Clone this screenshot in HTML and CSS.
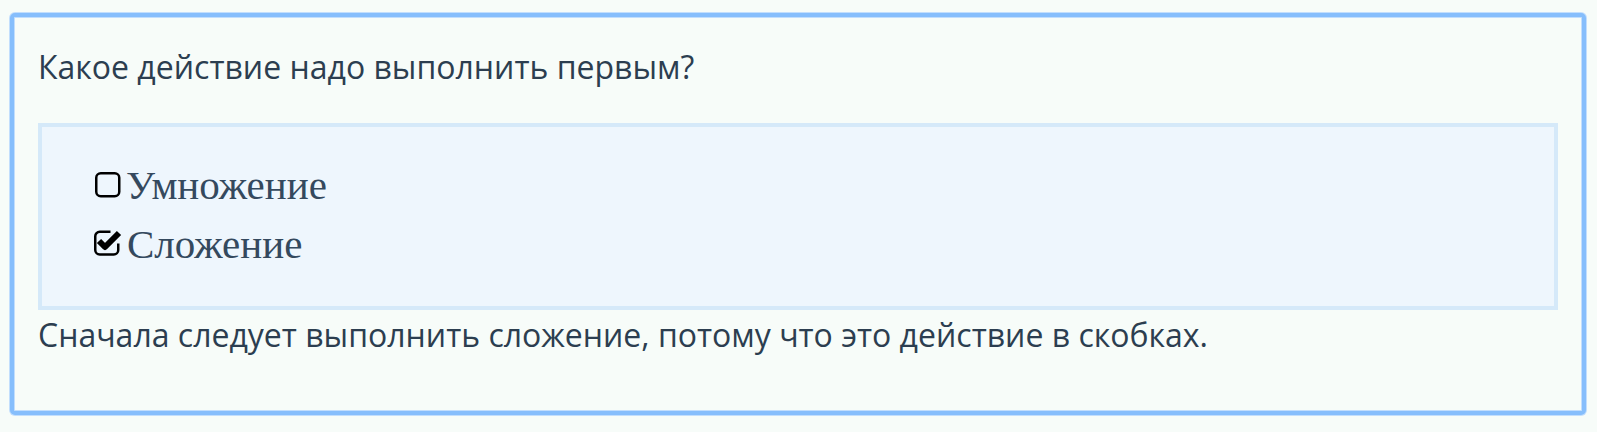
FILE: index.html
```html
<!DOCTYPE html>
<html lang="ru">
<head>
    <meta charset="UTF-8">
    <meta name="viewport" content="width=device-width, initial-scale=1.0">
    <title>Вопрос</title>
    <link rel="stylesheet" href="styles.css">
</head>
<body>

    <!-- Question card -->
    <div class="question-card">
        <p class="question">Какое действие надо выполнить первым?</p>

        <div class="options">
            <label class="option">
                <svg class="box" width="26" height="26" viewBox="0 0 26 26">
                    <rect x="1.25" y="1.25" width="23" height="23" rx="4.5" fill="none" stroke="#000" stroke-width="2.5"/>
                </svg>
                <span>Умножение</span>
            </label>
            <label class="option">
                <svg class="box checked" width="28" height="28" viewBox="0 0 28 28">
                    <path d="M16.5 3.75 H5.75 A4.5 4.5 0 0 0 1.25 8.25 V22 A4.5 4.5 0 0 0 5.75 26.5 H19.75 A4.5 4.5 0 0 0 24.25 22 V15.5" fill="none" stroke="#000" stroke-width="2.5"/>
                    <path d="M5 13 L11 19 L25 5" fill="none" stroke="#000" stroke-width="6" stroke-linejoin="round"/>
                </svg>
                <span>Сложение</span>
            </label>
        </div>

        <p class="explanation">Сначала следует выполнить сложение, потому что это действие в скобках.</p>
    </div>

</body>
</html>
```

FILE: styles.css
```css
body {
    margin: 0;
    padding: 13px 11px 16px 10px;
    font-family: "Open Sans", Arial, sans-serif;
    background-color: #f7fcf9;
    color: #2c3e50;
}

/* Card with blue frame */
.question-card {
    border: 4px solid #86befc;
    border-radius: 5px;
    box-shadow: 0 0 0 1px #c2defd, inset 0 0 0 1px #c2defd;
    background-color: #f7fcf9;
    padding: 28px 24px 54px 24px;
}

.question,
.explanation {
    margin: 0;
    font-size: 32px;
    line-height: 44px;
}

/* Answer list */
.options {
    margin: 34px 0 3px 0;
    border: 4px solid #d5e9f9;
    background-color: #eef6fd;
    padding: 28px 52px 33px 52px;
}

.option {
    display: flex;
    align-items: center;
    gap: 5px;
    height: 59px;
    font-family: "Liberation Serif", "DejaVu Serif", serif;
    font-size: 41px;
    color: #34495e;
}

.option .box {
    flex-shrink: 0;
    margin-left: 1px;
}

.option .box.checked {
    margin-left: 0;
    margin-top: -3px;
}
```
